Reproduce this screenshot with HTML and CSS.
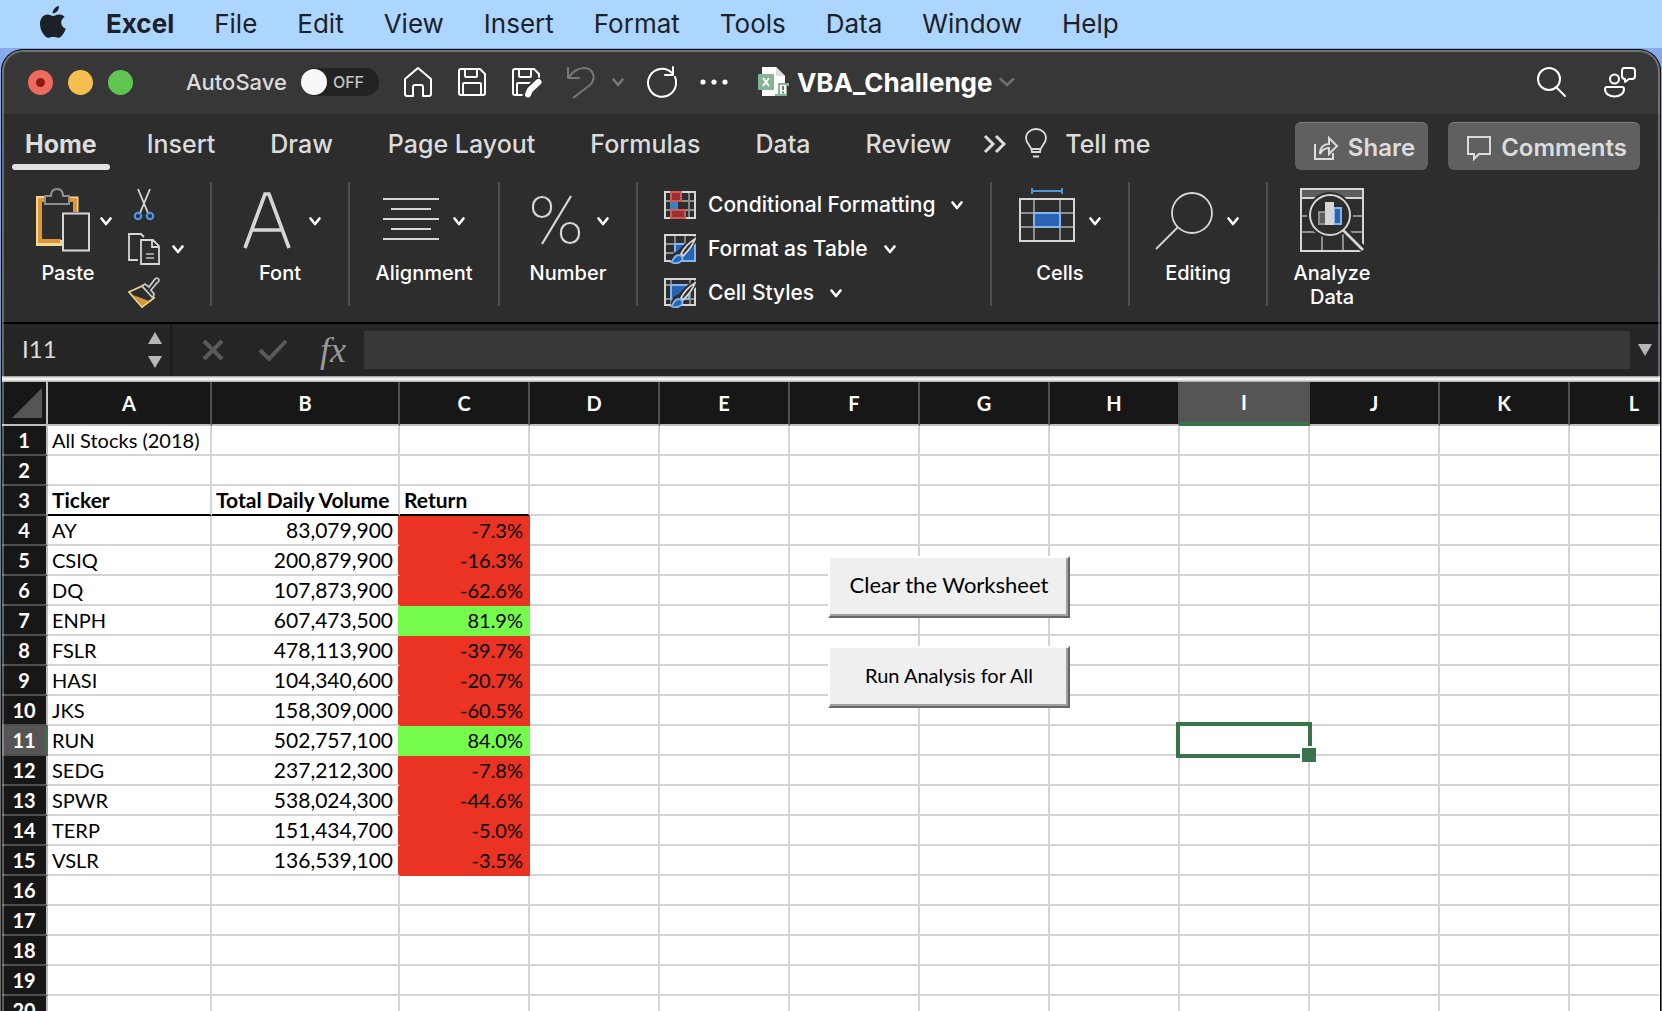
FILE: index.html
```html
<!DOCTYPE html>
<html lang="en">
<head>
<meta charset="utf-8">
<title>VBA_Challenge</title>
<link rel="stylesheet" href="styles.css">
</head>
<body>
<svg class="defs" aria-hidden="true">
  <symbol id="chev" viewBox="0 0 12 9"><path d="M1.5 1.5 6 7l4.500-5.500" fill="none" stroke="currentColor" stroke-width="2.600" stroke-linecap="round" stroke-linejoin="round"/></symbol>
  <symbol id="brush" viewBox="0 0 32 30">
    <path d="M7 29C12 28 17 26 20 21L32 9V2C26 4 19 11 14 17 10 17 8 21 7 25Z" fill="#2d2d2d"/>
    <path d="M17 20C20 14 26 8 31 5 29 11 24 17 19 22Z" fill="none" stroke="#d8d8d8" stroke-width="1.800"/>
    <path d="M7 28c3-1 2-7 8-7 4 1 5 5 1 7-3 2-7 1-9 0z" fill="#2a62b4" stroke="#84b8ec" stroke-width="1.800"/>
  </symbol>
</svg>

<nav class="menubar" aria-label="Menu bar">
  <svg class="apple" viewBox="0 0 26 32" aria-label="Apple"><path fill="#1c2127" d="M19 0c.3 3.500-2.700 7.500-6.300 7.400C12.400 4 15.600.4 19 0zM24.700 11c-2.300 1.400-3.600 3.300-3.500 5.800.1 3 1.900 5 4.500 6-1 3-2.600 5.700-4.500 7.700-2.800 2.600-5 .2-8 .2s-4.800 2.300-7.500.1C2.200 27.500 0 22.600 0 18c0-5.600 3.300-9.500 7.400-9.500 2.400 0 4.200 1.500 5.800 1.500 1.500 0 3.400-1.600 6.300-1.500 2.200.1 4 1 5.200 2.500z"/></svg>
  <a href="#" class="app">Excel</a>
  <a href="#">File</a>
  <a href="#">Edit</a>
  <a href="#">View</a>
  <a href="#">Insert</a>
  <a href="#">Format</a>
  <a href="#">Tools</a>
  <a href="#">Data</a>
  <a href="#">Window</a>
  <a href="#">Help</a>
</nav>

<main class="window">
  <header class="titlebar">
    <div class="lights">
      <button class="light red" aria-label="Close"></button>
      <button class="light yellow" aria-label="Minimize"></button>
      <button class="light green" aria-label="Zoom"></button>
    </div>
    <label class="autosave">AutoSave
      <span class="toggle"><input type="checkbox"><span class="off">OFF</span></span>
    </label>
    <div class="quick">
      <button aria-label="Home"><svg viewBox="0 0 32 32"><path d="M3 13 16 2l13 11v15q0 2-2 2h-6V21q0-2-2-2h-6q-2 0-2 2v9H5q-2 0-2-2z"/></svg></button>
      <button aria-label="Save"><svg viewBox="0 0 32 32"><path d="M5 3h19l5 5v19q0 2-2 2H5q-2 0-2-2V5q0-2 2-2zM9 3v7q0 1 1 1h10q1 0 1-1V3M7 29V18q0-1 1-1h16q1 0 1 1v11"/></svg></button>
      <button aria-label="Save as"><svg viewBox="0 0 32 32"><path d="M13 29H5q-2 0-2-2V5q0-2 2-2h19l5 5v4M9 3v7q0 1 1 1h10q1 0 1-1V3M7 29V18q0-1 1-1h13"/><path d="M17 29c0-3 1-4 3-6l8-7" stroke="#373737" stroke-width="9"/><path d="M18 28.500 20 24l8.500-8" stroke-width="6"/></svg></button>
      <div class="undo">
        <button aria-label="Undo"><svg viewBox="0 0 32 32"><path d="M4 2v10h11M4 12C9 5 14 2 20 2c9 0 13 10 6 17L9 32"/></svg></button>
        <svg class="chev" aria-hidden="true"><use href="#chev"/></svg>
      </div>
      <button aria-label="Redo"><svg viewBox="0 0 32 32"><path d="M26 7A14 14 0 1 0 30 16q0-3-1-5M27 1v8h-8"/></svg></button>
      <button aria-label="More"><svg viewBox="0 0 32 32"><g fill="#fff" stroke="none"><circle cx="3" cy="16" r="2.600"/><circle cx="14" cy="16" r="2.600"/><circle cx="25" cy="16" r="2.600"/></g></svg></button>
    </div>
    <h1 class="doc">
      <svg class="docicon" viewBox="0 0 32 32" aria-hidden="true"><path d="M4 1h14l9 9v20H4z" fill="#fff"/><path d="M18 1v9h9z" fill="#ddd"/><rect y="8" width="16" height="16" rx="1" fill="#86b594"/><path d="M5 12l6 8M11 12l-6 8" stroke="#fff" stroke-width="2"/><path d="M20 17h11v3h-2v10H17v-2h3z" fill="#86b594"/><path d="M22 19h6v9h-6z" fill="#fff"/><path d="M25 20v4m0 1.500v2" stroke="#777" stroke-width="2"/></svg>
      VBA_Challenge
      <svg class="chev dim" viewBox="0 0 16 10" aria-hidden="true"><path d="M1.500 2 8 8l6.500-6" fill="none" stroke="currentColor" stroke-width="2.400" stroke-linecap="round"/></svg>
    </h1>
    <div class="right">
      <button aria-label="Search"><svg viewBox="0 0 32 32"><circle cx="13" cy="13" r="11"/><path d="M20 21l9 9"/></svg></button>
      <button aria-label="Presence"><svg viewBox="0 0 32 32"><circle cx="10.500" cy="13" r="4.500"/><path d="M3 21h15q2 0 2 2c0 10-19 10-19 0q0-2 2-2zM20 2h8q3 0 3 3v5q0 3-3 3h-3l-4 3v-3q-3 0-3-3V5q0-3 2-3z"/></svg></button>
    </div>
  </header>

  <nav class="tabs" aria-label="Ribbon tabs">
    <button class="tab active">Home</button>
    <button class="tab">Insert</button>
    <button class="tab">Draw</button>
    <button class="tab">Page Layout</button>
    <button class="tab">Formulas</button>
    <button class="tab">Data</button>
    <button class="tab">Review</button>
    <button class="more" aria-label="More tabs"><svg viewBox="0 0 24 20"><path d="M2 2l8 8-8 8M13 2l8 8-8 8" fill="none" stroke="#dcdcdc" stroke-width="3"/></svg></button>
    <button class="tellme"><svg viewBox="0 0 22 32" aria-hidden="true"><path d="M7 24c0-6-6-8-6-14a10 9 0 0 1 20 0c0 6-6 8-6 14zM7 21h8M8 28.500h6" fill="none" stroke="#dcdcdc" stroke-width="1.800"/></svg>Tell me</button>
    <div class="actions">
      <button class="pill"><svg viewBox="0 0 26 26" aria-hidden="true"><path d="M2 9v15h18v-6M7 19c0-7 4-10 9-10V3l8 8-8 8v-6c-4 0-7 2-9 6z"/></svg>Share</button>
      <button class="pill"><svg viewBox="0 0 26 26" aria-hidden="true"><path d="M2 2h22v17H13l-5 5v-5H2z"/></svg>Comments</button>
    </div>
  </nav>

  <section class="ribbon" aria-label="Home">
    <div class="group clipboard">
      <button class="paste">
        <svg class="big" viewBox="0 0 64 66" aria-hidden="true"><path d="M8 13H3v44h23" fill="none" stroke="#f7d98d" stroke-width="6"/><path d="M2 13h38v13M3 12v44h22" fill="none" stroke="#f7d98d" stroke-width="5"/><path d="M9 14H4v41h20M34 14h5v12" fill="none" stroke="#dc963c" stroke-width="4"/><path d="M9 18v-8h6q0-7 6-7t6 7h6v8z" fill="#2d2d2d" stroke="#8e8e8e" stroke-width="2"/><path d="M27 27.500h26v37H27z" fill="#2d2d2d" stroke="#d6d6d6" stroke-width="2"/></svg>
        <svg class="chev" aria-hidden="true"><use href="#chev"/></svg>
        <span>Paste</span>
      </button>
      <div class="tools">
        <button aria-label="Cut"><svg viewBox="0 0 32 32"><path d="M10 0l10 24M22 0 12 24" stroke="#d6d6d6" stroke-width="1.800"/><g fill="none" stroke="#4f94dc" stroke-width="2.200"><circle cx="10" cy="27" r="3.200"/><circle cx="22" cy="27" r="3.200"/></g></svg></button>
        <button aria-label="Copy"><svg viewBox="0 0 32 32"><path d="M10 27H1V1h12l3 3M13 7h12l6 6v18H13zM24 7v7h7" fill="none" stroke="#d6d6d6" stroke-width="1.800"/><path d="M18 21h8M18 25h8" stroke="#9a9a9a" stroke-width="1.800"/></svg><svg class="chev" aria-hidden="true"><use href="#chev"/></svg></button>
        <button aria-label="Format Painter"><svg viewBox="0 0 32 32"><path d="M1 15 14 9l12 12-12 9z" fill="#2d2d2d" stroke="#f7d98d" stroke-width="1.800"/><path d="M5 18l16 6-7 5z" fill="#dc963c"/><path d="M14 9l3-2 4 3 6-8q3-2 4 1 0 2-2 3l-6 7 3 4-1 4z" fill="#2d2d2d" stroke="#c8c8c8" stroke-width="1.800"/></svg></button>
      </div>
    </div>
    <div class="group">
      <button class="large"><span class="row"><svg class="big" viewBox="0 0 56 66" aria-hidden="true"><path d="M6 62 26 8h4l20 54M13 44h30" fill="none" stroke="#d6d6d6" stroke-width="3.600"/></svg><svg class="chev" aria-hidden="true"><use href="#chev"/></svg></span>Font</button>
    </div>
    <div class="group wide">
      <button class="large"><span class="row"><svg class="big" viewBox="0 0 56 66" aria-hidden="true"><path d="M0 13h56M8 23h40M0 33h56M8 43h40M0 53h56" stroke="#d6d6d6" stroke-width="2"/></svg><svg class="chev" aria-hidden="true"><use href="#chev"/></svg></span>Alignment</button>
    </div>
    <div class="group">
      <button class="large"><span class="row"><svg class="big" viewBox="0 0 56 66" aria-hidden="true"><g fill="none" stroke="#d6d6d6" stroke-width="2.200"><rect x="6" y="11" width="18" height="20" rx="9"/><rect x="34" y="37" width="18" height="20" rx="9"/><path d="M44 10 15 58"/></g></svg><svg class="chev" aria-hidden="true"><use href="#chev"/></svg></span>Number</button>
    </div>
    <div class="group styles">
      <button><svg class="small" viewBox="0 0 32 30" aria-hidden="true"><path d="M1 11h30M1 20h30M7 2v26M25 2v26" stroke="#8e8e8e" stroke-width="1.800"/><path d="M1 2h30v26H1z" fill="none" stroke="#d6d6d6" stroke-width="2"/><path d="M7 2h10v9H7zM7 20h14v8H7z" fill="#9c302e" stroke="#cf5a58" stroke-width="2"/><path d="M6 12h8v7H6z" fill="#3f7fc4"/></svg>Conditional Formatting<svg class="chev" aria-hidden="true"><use href="#chev"/></svg></button>
      <button><svg class="small" viewBox="0 0 32 30" aria-hidden="true"><path d="M1 10h30M1 19h30M11 1v26M21 1v26" stroke="#8e8e8e" stroke-width="1.800"/><path d="M1 1h30v26H1z" fill="none" stroke="#d6d6d6" stroke-width="2"/><path d="M11 10h20v17H11z" fill="#2a62b4" stroke="#84b8ec" stroke-width="2"/><use href="#brush"/></svg>Format as Table<svg class="chev" aria-hidden="true"><use href="#chev"/></svg></button>
      <button><svg class="small" viewBox="0 0 32 30" aria-hidden="true"><path d="M1 7h30M1 21h30M7 1v26M26 1v26" stroke="#8e8e8e" stroke-width="1.800"/><path d="M1 1h30v26H1z" fill="none" stroke="#d6d6d6" stroke-width="2"/><path d="M7 7h18v14H7z" fill="#2a62b4" stroke="#84b8ec" stroke-width="2"/><use href="#brush"/></svg>Cell Styles<svg class="chev" aria-hidden="true"><use href="#chev"/></svg></button>
    </div>
    <div class="group">
      <button class="large"><span class="row"><svg class="big" viewBox="0 0 56 66" aria-hidden="true"><path d="M13 5h30M13 2v6M43 2v6" stroke="#4f94dc" stroke-width="2"/><path d="M1 27h54M1 41h54M15 13v42M41 13v42" stroke="#8e8e8e" stroke-width="2"/><path d="M1 13h54v42H1z" fill="none" stroke="#d6d6d6" stroke-width="2"/><path d="M15 27h26v14H15z" fill="#2a62b4" stroke="#84b8ec" stroke-width="2"/></svg><svg class="chev" aria-hidden="true"><use href="#chev"/></svg></span>Cells</button>
    </div>
    <div class="group">
      <button class="large"><span class="row"><svg class="big" viewBox="0 0 56 66" aria-hidden="true"><g fill="none" stroke="#d6d6d6" stroke-width="1.800"><circle cx="35" cy="27" r="20"/><path d="M21 41-1 63"/></g></svg><svg class="chev" aria-hidden="true"><use href="#chev"/></svg></span>Editing</button>
    </div>
    <div class="group last">
      <button class="large"><svg class="analyze" viewBox="0 0 64 66" aria-hidden="true"><path d="M1 4h62v8H1z" fill="#5e5e5e"/><path d="M1 30h62M1 46h62M22 46v19M43 46v19" stroke="#8e8e8e" stroke-width="2"/><path d="M1 12h62M1 3h62v62H1z" fill="none" stroke="#d6d6d6" stroke-width="2"/><circle cx="30" cy="29" r="23" fill="#2d2d2d"/><path d="M42 42l23 23" stroke="#2d2d2d" stroke-width="7"/><circle cx="30" cy="29" r="20" fill="none" stroke="#d6d6d6" stroke-width="2"/><path d="M43 44l20 20" stroke="#d6d6d6" stroke-width="2.600"/><path d="M19 26h7v12h-7z" fill="#5e5e5e" stroke="#8e8e8e" stroke-width="2"/><path d="M34 22h7v16h-7z" fill="#2a62b4" stroke="#84b8ec" stroke-width="2"/><path d="M25 16h9v23h-9z" fill="#d6d6d6"/></svg>Analyze<br>Data</button>
    </div>
  </section>

  <section class="formulabar" aria-label="Formula bar">
    <div class="namebox">
      <input type="text" value="I11" aria-label="Name box">
      <svg viewBox="0 0 14 36" aria-hidden="true"><path d="M7 0l7 12H0zM7 36l7-12H0z" fill="#b8b8b8"/></svg>
    </div>
    <div class="entry">
      <button aria-label="Cancel"><svg viewBox="0 0 30 24"><path d="M6 3l18 18M24 3 6 21" fill="none" stroke="#5a5a5a" stroke-width="4"/></svg></button>
      <button aria-label="Enter"><svg viewBox="0 0 30 24"><path d="M2 12l9 9L28 3" fill="none" stroke="#5a5a5a" stroke-width="4"/></svg></button>
      <button class="fx">fx</button>
    </div>
    <input type="text" class="formula" aria-label="Formula">
    <button class="expand" aria-label="Expand formula bar"><svg viewBox="0 0 14 12"><path d="M0 0h14L7 12z" fill="#b8b8b8"/></svg></button>
  </section>
  <div class="divider"></div>

  <section class="sheet">
    <table>
      <colgroup><col class="c-head"><col class="c-a"><col class="c-b"><col class="c"><col class="c"><col class="c"><col class="c"><col class="c"><col class="c"><col class="c"><col class="c"><col class="c"><col></colgroup>
      <thead><tr>
        <th class="corner"><svg viewBox="0 0 30 30" aria-hidden="true"><path d="M30 0v30H0z" fill="#555"/></svg></th>
        <th>A</th><th>B</th><th>C</th><th>D</th><th>E</th><th>F</th><th>G</th><th>H</th><th class="picked">I</th><th>J</th><th>K</th><th class="edge">L</th>
      </tr></thead>
      <tbody id="rows"></tbody>
    </table>
    <button class="macro clear">Clear the Worksheet</button>
    <button class="macro run">Run Analysis for All</button>
  </section>
</main>
<script src="sheet.js"></script>
</body>
</html>
```
FILE: styles.css
```css
* { box-sizing: border-box; }

body {
  margin: 0;
  height: 100vh;
  display: flex;
  flex-direction: column;
  overflow: hidden;
  background: linear-gradient(#86aaea 48px, #7fa4dc 250px, #6f8ba0 420px, #6b6a68 900px);
  font-family: Inter, "Liberation Sans", sans-serif;
}

button {
  margin: 0;
  padding: 0;
  border: 0;
  background: none;
  color: inherit;
  font: inherit;
}

svg { display: block; flex: none; }
.defs { position: absolute; width: 0; height: 0; }
.chev { width: 12px; height: 9px; }

/* macOS menu bar */
.menubar {
  display: flex;
  align-items: center;
  gap: 40px;
  height: 48px;
  flex: none;
  padding: 0 40px;
  background: #acd5ff;
  font-size: 26px;
  line-height: 46px;
}
.menubar a { color: #1c2127; text-decoration: none; }
.menubar .app { font-weight: 700; }
.apple { width: 26px; height: 32px; margin-bottom: 4px; }

/* application window */
.window {
  position: relative;
  flex: 1;
  min-height: 0;
  display: flex;
  flex-direction: column;
  margin: 1px 1px 0;
  border: 1px solid #0b0d10;
  border-bottom: 0;
  border-radius: 22px 22px 0 0;
  overflow: hidden;
  background: #2d2d2d;
  color: #dcdcdc;
}
.window::after {
  content: "";
  position: absolute;
  inset: 0;
  border: 2px solid rgba(255, 255, 255, 0.3);
  border-bottom: 0;
  border-radius: 21px 21px 0 0;
  pointer-events: none;
}

.titlebar {
  display: flex;
  align-items: center;
  flex: none;
  height: 64px;
  padding: 0 24px 0 26px;
  background: #373737;
}
.lights { display: flex; gap: 15px; }
.light { width: 25px; height: 25px; border-radius: 50%; }
.red { background: radial-gradient(circle, #8c1a10 4px, #ed6a5e 5px); }
.yellow { background: #f5bf4f; }
.green { background: #61c554; }
.autosave {
  display: flex;
  align-items: center;
  gap: 14px;
  margin-left: 53px;
  font-size: 22px;
  font-weight: 500;
}
.toggle {
  display: flex;
  align-items: center;
  gap: 6px;
  width: 78px;
  height: 28px;
  border-radius: 14px;
  background: #222;
}
.toggle input {
  appearance: none;
  width: 26px;
  height: 26px;
  margin: 0;
  border-radius: 50%;
  background: #f8f8f8;
}
.off { font-size: 16px; color: #c4c4c4; }
.quick { display: flex; align-items: center; gap: 22px; margin-left: 23px; }
.quick svg:not(.chev), .right svg {
  width: 32px;
  height: 32px;
  fill: none;
  stroke: #fff;
  stroke-width: 2;
  stroke-linecap: round;
  stroke-linejoin: round;
}
.undo { display: flex; align-items: center; gap: 16px; color: #777; }
.undo button svg:not(.chev) { stroke: #777; }
.doc {
  display: flex;
  align-items: center;
  gap: 7px;
  margin: 0 0 0 26px;
  color: #fff;
  font-size: 26px;
  font-weight: 700;
}
.docicon { width: 32px; height: 32px; }
.dim { width: 16px; height: 10px; color: #707070; }
.right { display: flex; gap: 36px; margin-left: auto; }

/* ribbon tabs */
.tabs {
  display: flex;
  align-items: center;
  flex: none;
  height: 60px;
  padding: 0 20px 0 10px;
  font-size: 25px;
  font-weight: 500;
}
.tab { height: 58px; padding: 0 13px; margin-right: 29px; line-height: 54px; }
.tab.active {
  position: relative;
  font-weight: 700;
  margin-right: 24px;
}
.tab.active::after {
  content: "";
  position: absolute;
  inset: auto 0 3px;
  height: 6px;
  border-radius: 3px;
  background: #e2e2e2;
}
.more svg { width: 24px; height: 20px; margin-left: -10px; }
.tellme { display: flex; align-items: center; gap: 18px; margin-left: 18px; line-height: 54px; }
.tellme svg { width: 22px; height: 32px; }
.actions { display: flex; gap: 20px; margin: 4px 0 0 auto; }
.pill {
  display: flex;
  align-items: center;
  gap: 9px;
  height: 48px;
  padding: 2px 13px 0 18px;
  border-radius: 6px;
  border-top: 1px solid #7c7c7c;
  background: #606060;
  font-size: 24px;
  font-weight: 600;
}
.pill svg { width: 26px; height: 26px; fill: none; stroke: #dcdcdc; stroke-width: 2; }

/* ribbon groups */
.ribbon {
  display: flex;
  flex: none;
  height: 148px;
  padding: 8px 0 16px;
  color: #fff;
  font-size: 20px;
  font-weight: 500;
  line-height: 24px;
}
.group {
  display: flex;
  justify-content: center;
  align-items: flex-start;
  width: 138px;
  padding-top: 4px;
  border-right: 2px solid #505050;
}
.group.wide { width: 150px; }
.group.last { width: 128px; border-right: 0; }
.large { display: flex; flex-direction: column; align-items: center; }
.row { display: flex; align-items: center; gap: 14px; margin-bottom: 9px; }
.row .chev, .paste .chev { margin-top: 4px; }
.big { width: 56px; height: 66px; overflow: visible; }
.analyze { width: 64px; height: 66px; margin-bottom: 9px; }
.clipboard { width: 210px; justify-content: flex-start; padding-left: 34px; gap: 16px; }
.paste {
  display: grid;
  grid-template-columns: 64px 12px;
  align-items: center;
  row-gap: 9px;
}
.paste .big { width: 64px; }
.tools { display: flex; flex-direction: column; gap: 12px; padding-top: 3px; }
.tools button { display: flex; align-items: center; gap: 12px; }
.tools svg:not(.chev) { width: 32px; height: 32px; }
.group.styles {
  flex-direction: column;
  justify-content: flex-start;
  width: 354px;
  padding: 1px 0 0 26px;
  font-size: 21px;
}
.styles button { display: flex; align-items: center; flex: none; gap: 12px; height: 44px; }
.styles .chev { margin-left: 4px; }
.small { width: 32px; height: 30px; }

/* formula bar */
.formulabar {
  display: flex;
  align-items: center;
  flex: none;
  height: 54px;
  padding-right: 8px;
  border-top: 2px solid #000;
  background: #252525;
}
.formulabar input {
  min-width: 0;
  border: 0;
  color: #dcdcdc;
  font: 24px Lato, sans-serif;
}
.namebox {
  display: flex;
  align-items: center;
  justify-content: space-between;
  width: 170px;
  height: 52px;
  padding: 0 8px 0 20px;
  border-right: 2px solid #1c1c1c;
}
.namebox input { width: 110px; padding: 0 0 4px; background: none; }
.namebox svg { width: 14px; height: 36px; }
.entry { display: flex; align-items: center; gap: 30px; padding: 0 16px 0 26px; }
.entry svg { width: 30px; height: 24px; }
.fx {
  padding: 0 2px;
  color: #9a9a9a;
  font: italic 36px/40px "Liberation Serif", serif;
}
.formulabar .formula { flex: 1; height: 38px; padding: 0 8px; background: #383838; }
.expand { margin-left: 8px; }
.expand svg { width: 14px; height: 12px; }
.divider {
  flex: none;
  height: 6px;
  background: linear-gradient(#a8a8a8 1px, #fff 2px, #e8e8e8 4px, #a8a8a8 6px);
}

/* worksheet */
.sheet {
  position: relative;
  flex: 1;
  min-height: 0;
  overflow: hidden;
  background: #fff;
  color: #000;
  font: 20px/28px Lato, sans-serif;
}
table {
  width: 100%;
  min-width: 1698px;
  table-layout: fixed;
  border-collapse: separate;
  border-spacing: 0;
}
.c-head { width: 46px; }
.c-a { width: 164px; }
.c-b { width: 188px; }
.c { width: 130px; }
th {
  padding: 0;
  border-right: 2px solid #505050;
  border-bottom: 2px solid #bfbfbf;
  background: #171717;
  color: #fff;
  font-weight: 700;
}
thead th { height: 44px; }
.corner { border-right-color: #bfbfbf; }
.corner svg { width: 30px; height: 30px; margin-left: 10px; }
.picked { border-right-color: #555; border-bottom: 4px solid #3a7349; background: #555; }
tbody th { height: 30px; border-right-color: #bfbfbf; border-bottom-color: #505050; }
tbody .picked { border-right: 2px solid #3a7349; border-bottom: 2px solid #505050; }
td {
  height: 30px;
  padding: 0 5px 0 4px;
  border-right: 2px solid #d4d4d4;
  border-bottom: 2px solid #d4d4d4;
  white-space: nowrap;
}
.heading { font-size: 21px; font-weight: 700; border-bottom-color: #000; }
.volume { font-size: 21px; text-align: right; }
.return { text-align: right; }
.down { border-color: #ea3323; background: #ea3323; }
.up { border-color: #75fb4c; background: #75fb4c; }
.volume.nextdown { border-right-color: #ea3323; }
.volume.nextup { border-right-color: #75fb4c; }

.cursor { position: relative; }
.cursor::before {
  content: "";
  position: absolute;
  z-index: 1;
  inset: -4px;
  border: 4px solid #3a7349;
}
.cursor::after {
  content: "";
  position: absolute;
  z-index: 2;
  right: -8px;
  bottom: -8px;
  width: 14px;
  height: 14px;
  border: 2px solid #fff;
  border-width: 2px 0 0 2px;
  background: #3a7349;
}

/* form buttons floating over the cells */
.macro {
  position: absolute;
  left: 826px;
  width: 242px;
  height: 62px;
  padding-bottom: 5px;
  border: 2px solid;
  border-color: #fff #666 #666 #fff;
  background: #efefef;
  box-shadow: inset -2px -2px #a0a0a0;
  color: #000;
  font: 20px Lato, sans-serif;
}
.clear { top: 174px; font-size: 22px; }
.run { top: 264px; }
```
FILE: sheet.js
```js
const stocks = [
  ["AY", "83,079,900", "-7.3%"],
  ["CSIQ", "200,879,900", "-16.3%"],
  ["DQ", "107,873,900", "-62.6%"],
  ["ENPH", "607,473,500", "81.9%"],
  ["FSLR", "478,113,900", "-39.7%"],
  ["HASI", "104,340,600", "-20.7%"],
  ["JKS", "158,309,000", "-60.5%"],
  ["RUN", "502,757,100", "84.0%"],
  ["SEDG", "237,212,300", "-7.8%"],
  ["SPWR", "538,024,300", "-44.6%"],
  ["TERP", "151,434,700", "-5.0%"],
  ["VSLR", "136,539,100", "-3.5%"]
];
const FIRST_STOCK_ROW = 4;
const ROWS = 20;
const COLUMNS = 12;

function cell(text, classes) {
  return `<td class="${classes || ""}">${text || ""}</td>`;
}

let html = "";
for (let r = 1; r <= ROWS; r++) {
  const cells = Array.from({ length: COLUMNS }, () => cell());
  const stock = stocks[r - FIRST_STOCK_ROW];
  if (r === 1) cells[0] = cell("All Stocks (2018)");
  if (r === 3) {
    ["Ticker", "Total Daily Volume", "Return"].forEach((t, i) => {
      cells[i] = cell(t, "heading");
    });
  }
  if (stock) {
    const trend = stock[2].startsWith("-") ? "down" : "up";
    cells[0] = cell(stock[0]);
    cells[1] = cell(stock[1], "volume next" + trend);
    cells[2] = cell(stock[2], "return " + trend);
  }
  if (r === 11) cells[8] = cell("", "cursor");
  html += `<tr><th class="${r === 11 ? "picked" : ""}">${r}</th>${cells.join("")}</tr>`;
}
document.getElementById("rows").innerHTML = html;
```
